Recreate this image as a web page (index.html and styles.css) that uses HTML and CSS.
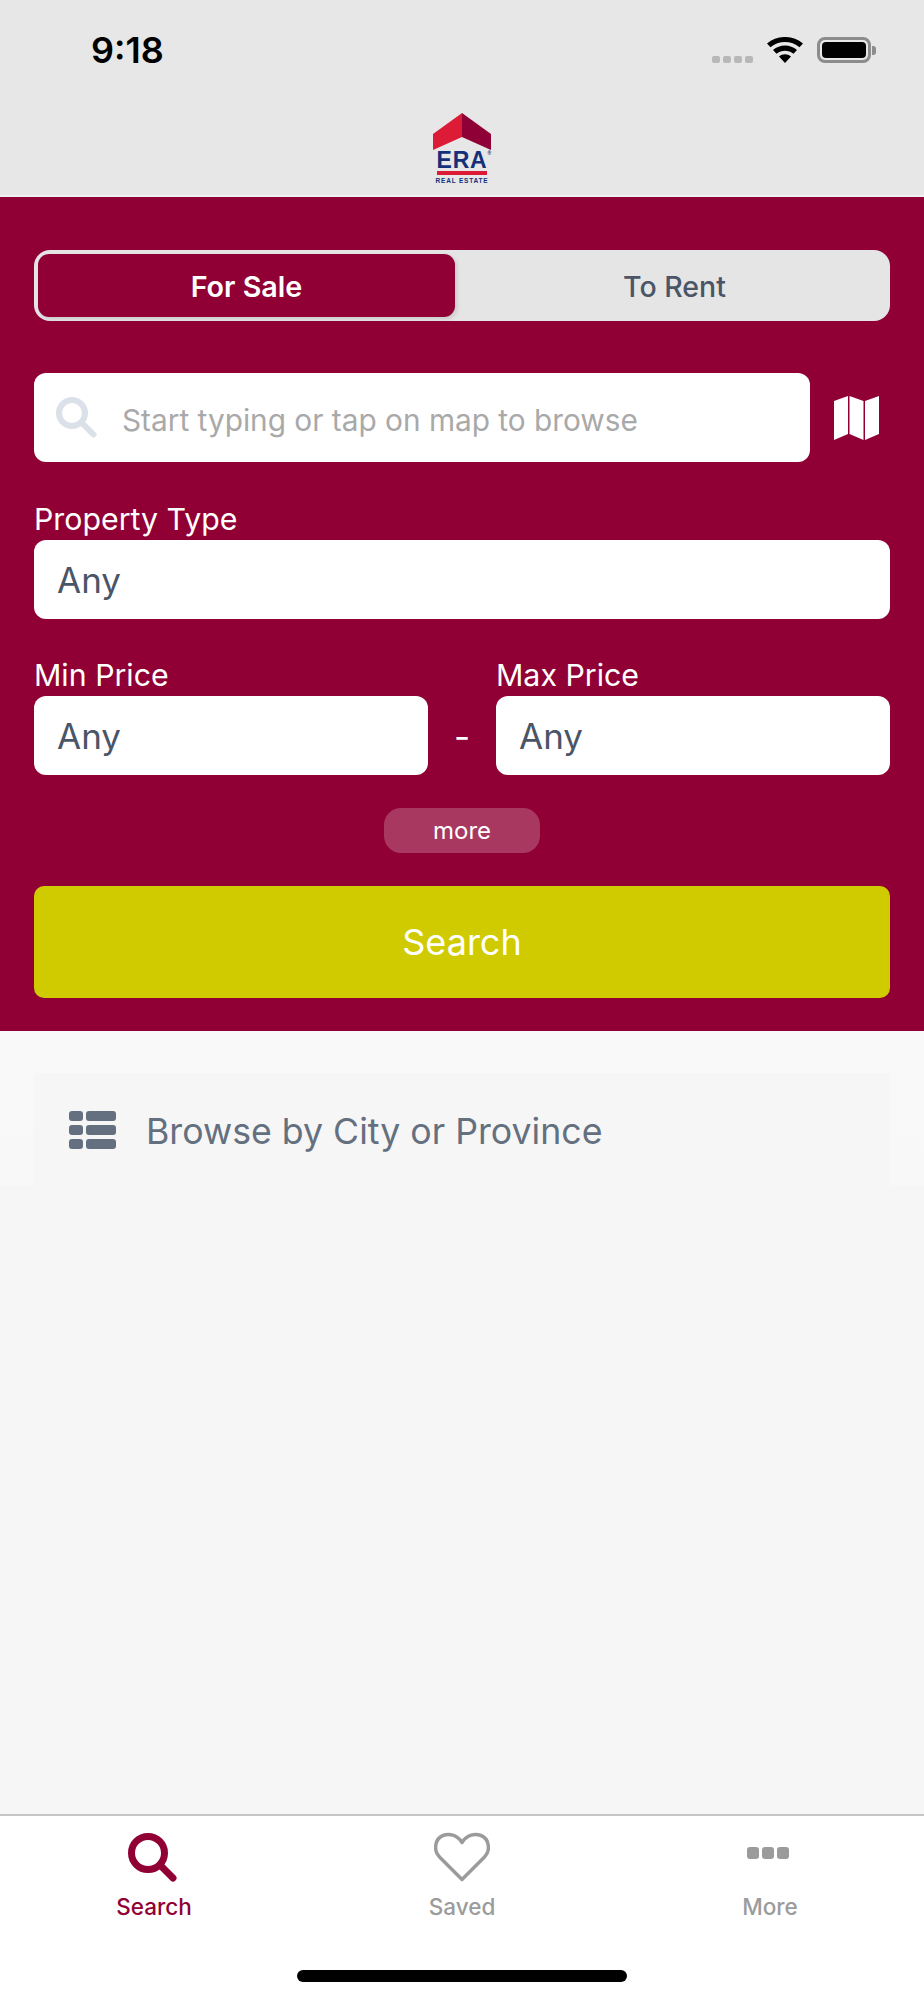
FILE: index.html
```html
<!DOCTYPE html>
<html lang="en">
<head>
<meta charset="utf-8">
<title>ERA Real Estate</title>
<link rel="stylesheet" href="styles.css">
</head>
<body>
<div class="app">
  <header class="top">
    <div class="status">
      <span class="time">9:18</span>
      <div class="status-icons">
        <span class="signal"><i></i><i></i><i></i><i></i></span>
        <svg class="wifi" viewBox="0 0 36 26"><path d="M18 26l-6-6.500c3.500-3 8.500-3 12 0zM9.500 16.800L6 13c6.800-6 17.200-6 24 0l-3.500 3.800c-4.800-4.200-12.200-4.200-17 0zM3.500 10.300L0 6.500c10.200-8.700 25.800-8.700 36 0l-3.500 3.800c-8.200-7-20.800-7-29 0z"/></svg>
        <span class="battery"><span class="battery-fill"></span></span>
        <span class="battery-nub"></span>
      </div>
    </div>
    <div class="logo">
      <svg class="roof" viewBox="0 0 58 37"><polygon points="29,0 0,21 0,37 29,24" fill="#dc1c36"/><polygon points="29,0 58,21 58,37 29,24" fill="#8e0036"/></svg>
      <span class="logo-era">ERA<sup>®</sup></span>
      <span class="logo-bar"></span>
      <span class="logo-sub">REAL ESTATE</span>
    </div>
  </header>

  <section class="panel">
    <div class="segment">
      <span class="seg seg-on">For Sale</span>
      <span class="seg seg-off">To Rent</span>
    </div>

    <div class="search-row">
      <div class="search-field">
        <svg class="search-icon" viewBox="0 0 41 41"><circle cx="16" cy="16" r="13" fill="none" stroke="#dbe1e8" stroke-width="6"/><path d="M26 26l11.500 11.500" stroke="#dbe1e8" stroke-width="6" stroke-linecap="round"/></svg>
        <span class="placeholder">Start typing or tap on map to browse</span>
      </div>
      <svg class="map-icon" viewBox="0 0 45 44"><path d="M0 5l14-5v38L0 44zM15.500 0l14 5v39l-14-6zM31 5l14-5v38l-14 6z" fill="#fff"/></svg>
    </div>

    <label class="field-label">Property Type</label>
    <div class="field">Any</div>

    <div class="price-row">
      <div class="price-col">
        <label class="field-label">Min Price</label>
        <div class="field">Any</div>
      </div>
      <span class="dash">-</span>
      <div class="price-col">
        <label class="field-label">Max Price</label>
        <div class="field">Any</div>
      </div>
    </div>

    <div class="more-wrap"><span class="more">more</span></div>
    <div class="search-btn">Search</div>
  </section>

  <main class="content">
    <div class="browse-wrap">
      <div class="browse">
        <svg class="list-icon" viewBox="0 0 47 38"><g fill="#64707f"><rect x="0" y="0" width="14" height="10" rx="3"/><rect x="17" y="0" width="30" height="10" rx="3"/><rect x="0" y="14" width="14" height="10" rx="3"/><rect x="17" y="14" width="30" height="10" rx="3"/><rect x="0" y="28" width="14" height="10" rx="3"/><rect x="17" y="28" width="30" height="10" rx="3"/></g></svg>
        <span class="browse-text">Browse by City or Province</span>
      </div>
    </div>
  </main>

  <nav class="tabs">
    <div class="tab tab-on">
      <svg class="tab-icon tab-icon-search" viewBox="0 0 50 50"><circle cx="21" cy="21" r="16.500" fill="none" stroke="#910035" stroke-width="7"/><path d="M33 33l13 13" stroke="#910035" stroke-width="7" stroke-linecap="round"/></svg>
      <span class="tab-label">Search</span>
    </div>
    <div class="tab">
      <svg class="tab-icon heart" viewBox="0 0 56 49"><path d="M28 47L5.500 24.500C-1 18 1 6 9 3c6-2.200 14-1 19 7 5-8 13-9.200 19-7 8 3 10 15 3.500 21.500z" fill="none" stroke="#9b9b9b" stroke-width="3.500" stroke-linejoin="round"/></svg>
      <span class="tab-label">Saved</span>
    </div>
    <div class="tab">
      <span class="dots"><i></i><i></i><i></i></span>
      <span class="tab-label">More</span>
    </div>
  </nav>
  <div class="home-bar"></div>
</div>
</body>
</html>
```
FILE: styles.css
```css
* { box-sizing: border-box; }
html, body { margin: 0; padding: 0; }
body { font-family: Inter, "Liberation Sans", sans-serif; background: #fff; }
.app { width: 924px; height: 2000px; display: flex; flex-direction: column; overflow: hidden; background: #f5f5f5; }

.top { height: 197px; background: #e7e7e7; display: flex; flex-direction: column; border-bottom: 2px solid #f1f1f1; }
.status { display: flex; justify-content: space-between; align-items: center; height: 100px; padding: 0 48px 0 91px; }
.time { font-size: 36px; font-weight: 600; color: #000; }
.status-icons { display: flex; align-items: center; }
.signal { display: flex; gap: 3px; margin: 19px 14px 0 0; }
.signal i { width: 8px; height: 7px; border-radius: 2px; background: #b8b8b8; }
.wifi { width: 36px; height: 26px; margin-right: 14px; }
.battery { width: 54px; height: 26px; border: 3px solid #8c8c8c; border-radius: 8px; padding: 2px; display: block; }
.battery-fill { display: block; height: 100%; background: #000; border-radius: 4px; }
.battery-nub { width: 4px; height: 9px; background: #8c8c8c; border-radius: 0 3px 3px 0; margin-left: 1px; }

.logo { width: 58px; margin: 13px auto 0; display: flex; flex-direction: column; align-items: center; }
.roof { width: 58px; height: 37px; display: block; flex: none; }
.logo-era { font-family: "Liberation Sans", sans-serif; font-weight: 700; font-size: 23px; letter-spacing: 0.8px; line-height: 18px; color: #14307a; margin-top: 1px; position: relative; }
.logo-era sup { position: absolute; font-size: 5px; line-height: 1; top: 0; left: 100%; }
.logo-bar { width: 50px; height: 4px; background: #dc1c36; margin-top: 2px; flex: none; }
.logo-sub { font-family: "Liberation Sans", sans-serif; font-weight: 700; font-size: 6.500px; letter-spacing: 0.8px; line-height: 7px; color: #14307a; margin-top: 2px; white-space: nowrap; }

.panel { height: 834px; flex: none; background: #910035; padding: 53px 34px 0; display: flex; flex-direction: column; }
.segment { height: 71px; border-radius: 16px; background: #e5e5e5; display: flex; padding: 4px; flex: none; }
.seg { display: flex; align-items: center; justify-content: center; padding-top: 1px; }
.seg-on { width: 417px; background: #910035; color: #fff; font-size: 28.700px; font-weight: 600; border-radius: 11px; box-shadow: 2px 2px 4px rgba(0,0,0,.12); }
.seg-off { flex: 1; color: #4a5568; font-size: 28.500px; font-weight: 500; padding-left: 8px; }

.search-row { display: flex; align-items: center; margin-top: 52px; flex: none; }
.search-field { width: 776px; height: 89px; background: #fff; border-radius: 12px; display: flex; align-items: center; padding-left: 22px; }
.search-icon { width: 41px; height: 41px; margin-right: 25px; flex: none; }
.placeholder { font-size: 29.800px; color: #a9a9a9; white-space: nowrap; padding-top: 4px; }
.map-icon { width: 45px; height: 44px; margin-left: 24px; }

.field-label { display: block; color: #fff; font-size: 30.300px; line-height: 34px; padding-bottom: 2px; height: 34px; }
.search-row + .field-label { margin-top: 40px; }
.field { height: 79px; margin-top: 4px; background: #fff; border-radius: 12px; display: flex; align-items: center; padding-left: 23px; font-size: 35px; color: #4a5568; flex: none; }

.price-row { display: flex; align-items: flex-end; margin-top: 39px; flex: none; }
.price-col { width: 394px; }
.dash { width: 68px; height: 79px; display: flex; align-items: center; justify-content: center; color: #fff; font-size: 35px; }

.more-wrap { display: flex; justify-content: center; margin-top: 33px; flex: none; }
.more { width: 156px; height: 45px; border-radius: 17px; background: #a83860; color: #fff; font-size: 24px; display: flex; align-items: center; justify-content: center; }
.search-btn { height: 112px; margin-top: 33px; background: #d0ca00; border-radius: 10px; color: #fff; font-size: 36px; display: flex; align-items: center; justify-content: center; flex: none; }

.content { flex: 1; background: #f6f6f6; }
.browse-wrap { height: 155px; padding: 42px 34px 0; background: linear-gradient(#f9f9f9, #f8f8f8); }
.browse { height: 113px; display: flex; align-items: center; padding-left: 35px; background: #f6f6f6; }
.list-icon { width: 47px; height: 38px; flex: none; }
.browse-text { font-size: 35.700px; color: #64707f; margin-left: 30px; padding-top: 3px; }

.tabs { height: 186px; flex: none; background: #fff; border-top: 2px solid #c6c6c6; display: flex; padding-top: 16px; }
.tab { flex: 1; display: flex; flex-direction: column; align-items: center; color: #9b9b9b; font-size: 22.500px; font-weight: 500; }
.tab-on { color: #910035; }
.tab-icon { width: 50px; height: 50px; display: block; flex: none; }
.tab-icon-search { margin-left: -5px; }
.heart { width: 56px; }
.tab-label { margin-top: 11px; line-height: 27px; }
.dots { display: flex; gap: 3px; height: 50px; padding-top: 15px; margin-left: -5px; }
.dots i { width: 12px; height: 12px; border-radius: 3px; background: #9b9b9b; }
.home-bar { position: absolute; left: 297px; top: 1970px; width: 330px; height: 12px; border-radius: 6px; background: #000; }
```
